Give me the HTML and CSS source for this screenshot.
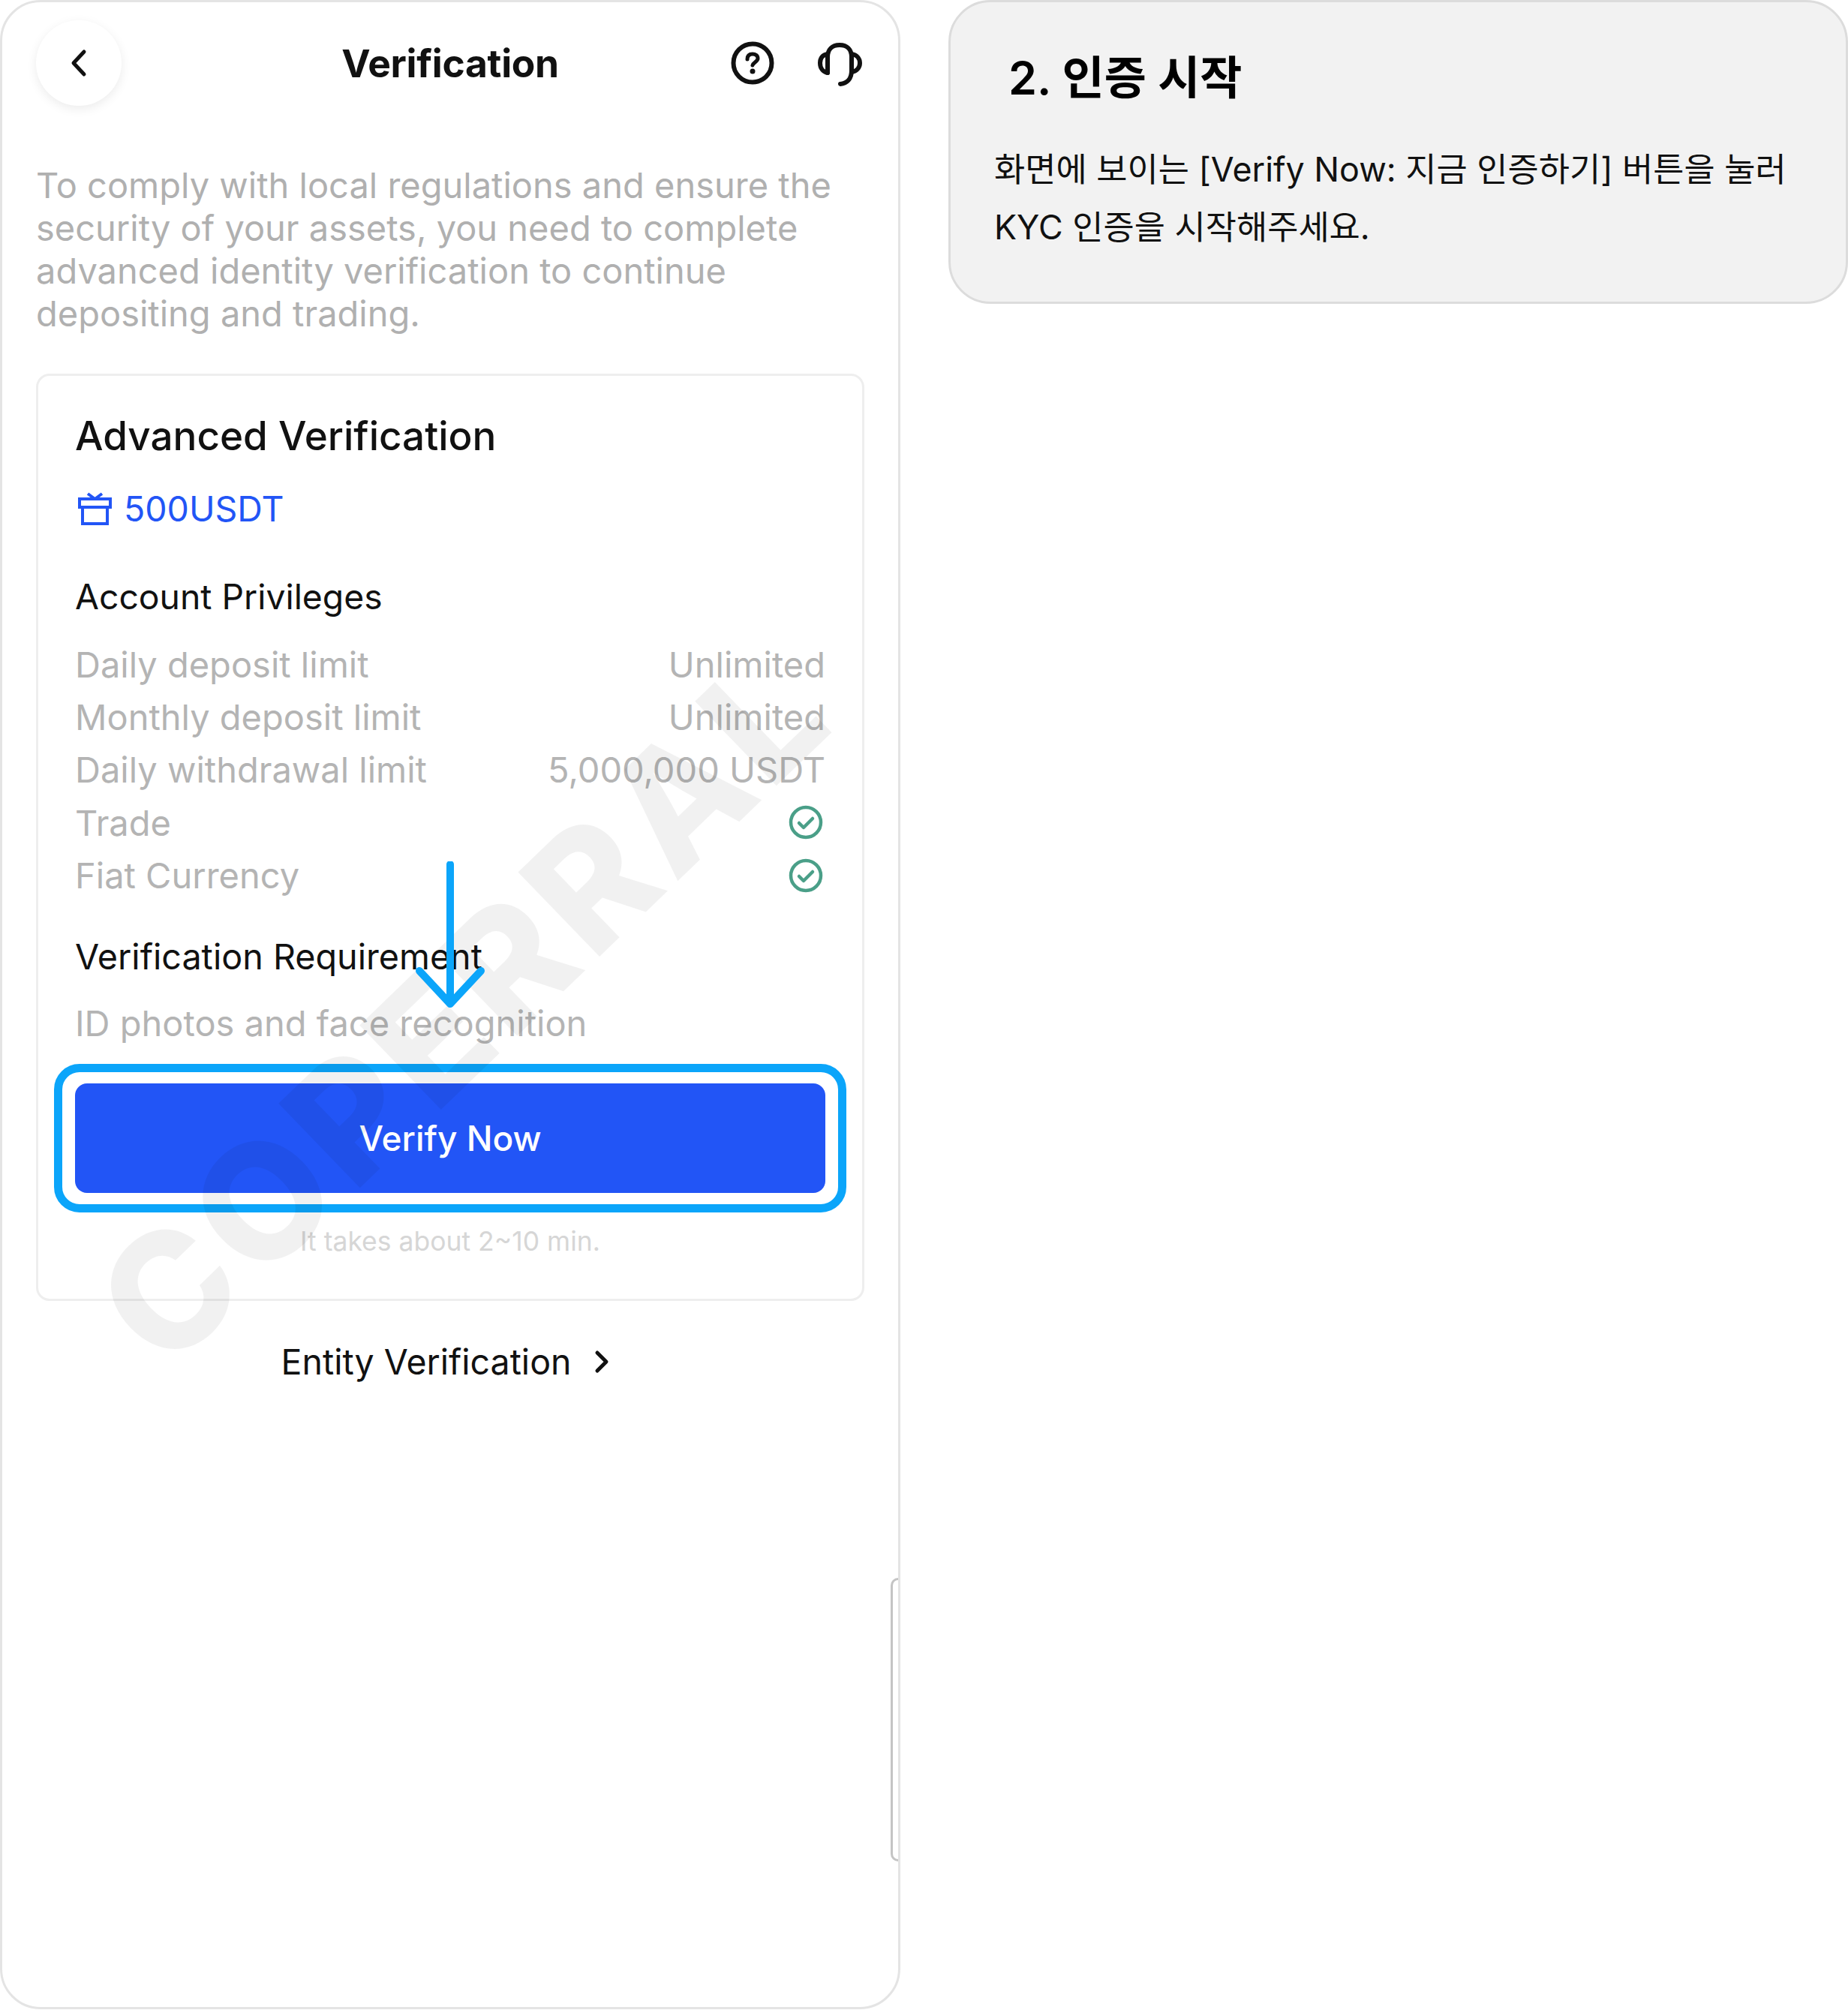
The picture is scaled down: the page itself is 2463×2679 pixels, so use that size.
FILE: index.html
```html
<!DOCTYPE html>
<html lang="ko">
<head>
  <meta charset="UTF-8" />
  <title>Verification</title>
  <link rel="stylesheet" href="styles.css">
</head>
<body>

<!-- Phone screen -->
<div class="phone">
  <div class="header">
    <div class="back">
      <svg width="30" height="42" viewBox="0 0 30 42"><path d="M22 6 L8 21 L22 36" fill="none" stroke="#111" stroke-width="5" stroke-linecap="round" stroke-linejoin="round"/></svg>
    </div>
    <div class="title">Verification</div>
    <div class="header-icons">
      <svg width="60" height="60" viewBox="0 0 60 60">
        <circle cx="30" cy="30" r="25.5" fill="none" stroke="#111" stroke-width="6"/>
        <path d="M23 25 C23 20 26 18 30 18 C34 18 37 20 37 24 C37 28 31 29 30 33" fill="none" stroke="#111" stroke-width="5" stroke-linecap="round"/>
        <circle cx="30" cy="41" r="3.5" fill="#111"/>
      </svg>
      <svg width="64" height="64" viewBox="0 0 64 64">
        <path d="M16 45 V24 C16 14 22 8 32 8 C42 8 48 14 48 24 V42 C48 53 42 59 33 60" fill="none" stroke="#111" stroke-width="6" stroke-linecap="round"/>
        <path d="M16 20 C9 21 6 26 6 32 C6 39 10 44 16 45 Z" fill="none" stroke="#111" stroke-width="6" stroke-linejoin="round"/>
        <path d="M48 20 C55 21 59 26 59 32 C59 38 55 43 48 44" fill="none" stroke="#111" stroke-width="6" stroke-linecap="round"/>
      </svg>
    </div>
  </div>

  <p class="desc">To comply with local regulations and ensure the security of your assets, you need to complete advanced identity verification to continue depositing and trading.</p>

  <div class="card">
    <div class="card-title">Advanced Verification</div>
    <div class="reward">
      <svg width="46" height="46" viewBox="0 0 46 46">
        <path d="M3 10 H44 V21 H3 Z M7 21 V43 H40 V21 M23.500 10 L14 3 M23.500 10 L33 3" fill="none" stroke="#2255f6" stroke-width="4"/>
      </svg>
      <span>500USDT</span>
    </div>

    <div class="section-label">Account Privileges</div>
    <div class="rows">
      <div class="row"><span>Daily deposit limit</span><span>Unlimited</span></div>
      <div class="row"><span>Monthly deposit limit</span><span>Unlimited</span></div>
      <div class="row"><span>Daily withdrawal limit</span><span>5,000,000 USDT</span></div>
      <div class="row"><span>Trade</span>
        <svg class="check" width="46" height="46" viewBox="0 0 46 46"><circle cx="23" cy="23" r="20" fill="none" stroke="#4a9f88" stroke-width="4.5"/><path d="M14 24 L20 30 L32 18" fill="none" stroke="#4a9f88" stroke-width="4.5" stroke-linecap="round" stroke-linejoin="round"/></svg>
      </div>
      <div class="row"><span>Fiat Currency</span>
        <svg class="check" width="46" height="46" viewBox="0 0 46 46"><circle cx="23" cy="23" r="20" fill="none" stroke="#4a9f88" stroke-width="4.5"/><path d="M14 24 L20 30 L32 18" fill="none" stroke="#4a9f88" stroke-width="4.5" stroke-linecap="round" stroke-linejoin="round"/></svg>
      </div>
    </div>

    <div class="section-label req-label">Verification Requirement</div>
    <div class="req-text">ID photos and face recognition</div>

    <div class="verify-wrap">
      <div class="verify-btn">Verify Now</div>
      <div class="highlight"></div>
    </div>
    <div class="note">It takes about 2~10 min.</div>
  </div>

  <div class="entity">
    <span>Entity Verification</span>
    <svg width="24" height="34" viewBox="0 0 24 34"><path d="M6 5 L18 17 L6 29" fill="none" stroke="#111" stroke-width="5" stroke-linecap="round" stroke-linejoin="round"/></svg>
  </div>

  <!-- overlays -->
  <div class="watermark">COPERRAL</div>
  <svg class="arrow" width="100" height="200" viewBox="0 0 100 200">
    <path d="M50 4 V190 M9 146 L50 190 L91 146" fill="none" stroke="#0ba5fa" stroke-width="10" stroke-linecap="round" stroke-linejoin="round"/>
  </svg>
  <div class="side-tab"></div>
</div>

<!-- Step note -->
<div class="note-card">
  <h2 class="step-title">2. 인증 시작</h2>
  <p class="step-text">화면에 보이는 [Verify Now: 지금 인증하기] 버튼을 눌러<br>KYC 인증을 시작해주세요.</p>
</div>

</body>
</html>
```

FILE: styles.css
```css
* {
  box-sizing: border-box;
}
body {
  margin: 0;
  background: #fff;
  font-family: Inter, "Noto Sans CJK KR", sans-serif;
  display: flex;
  align-items: flex-start;
  gap: 64px;
  width: 2463px;
  height: 2679px;
  overflow: hidden;
}
.phone {
  position: relative;
  flex: none;
  width: 1200px;
  height: 2678px;
  border: 3px solid #e4e4e4;
  border-radius: 54px;
  padding: 0 45px;
  overflow: hidden;
  background: #fff;
}
.header {
  display: flex;
  align-items: center;
  justify-content: space-between;
  height: 162px;
  position: relative;
}
.back {
  width: 114px;
  height: 114px;
  border-radius: 50%;
  background: #fff;
  box-shadow: 0 4px 14px rgba(0, 0, 0, 0.08);
  display: flex;
  align-items: center;
  justify-content: center;
}
.title {
  position: absolute;
  left: 0;
  right: 0;
  text-align: center;
  font-size: 51.5px;
  font-weight: 700;
  color: #111;
  letter-spacing: -0.3px;
}
.header-icons {
  display: flex;
  align-items: center;
  gap: 54px;
  margin-right: 1px;
}
.desc {
  margin: 53px 0 52px;
  font-size: 47px;
  line-height: 57px;
  color: #b0b0b0;
}
.card {
  border: 3px solid #eee;
  border-radius: 18px;
  padding: 48px 49px 0;
  height: 1236px;
}
.card-title {
  font-size: 53px;
  line-height: 64px;
  font-weight: 500;
  color: #111;
}
.reward {
  display: flex;
  align-items: center;
  gap: 16px;
  margin-top: 35px;
  padding-left: 3px;
  font-size: 46.5px;
  line-height: 60px;
  color: #2255f6;
}
.section-label {
  margin-top: 56px;
  font-size: 46.3px;
  line-height: 62px;
  color: #111;
}
.rows {
  margin-top: 24px;
}
.row {
  display: flex;
  align-items: center;
  justify-content: space-between;
  height: 70.4px;
  font-size: 47px;
  color: #b4b4b4;
}
.check {
  margin-right: 3px;
}
.req-label {
  margin-top: 42px;
  font-size: 46.7px;
}
.req-text {
  margin-top: 27px;
  font-size: 47px;
  line-height: 62px;
  color: #b4b4b4;
}
.verify-wrap {
  position: relative;
  margin-top: 49px;
}
.verify-btn {
  height: 146px;
  border-radius: 16px;
  background: #2255f6;
  color: #fff;
  font-size: 46px;
  font-weight: 500;
  display: flex;
  align-items: center;
  justify-content: center;
}
.highlight {
  position: absolute;
  top: -26px;
  bottom: -26px;
  left: -28px;
  right: -28px;
  border: 11px solid #0ba5fa;
  border-radius: 34px;
}
.note {
  margin-top: 42px;
  text-align: center;
  font-size: 35.5px;
  line-height: 46px;
  color: #d6d6d6;
}
.entity {
  display: flex;
  align-items: center;
  justify-content: center;
  gap: 28px;
  margin-top: 50px;
  margin-left: -12px;
  font-size: 46.5px;
  line-height: 62px;
  color: #111;
}
.watermark {
  position: absolute;
  left: -10px;
  top: 1232px;
  font-size: 215px;
  line-height: 1;
  font-weight: 800;
  letter-spacing: 10px;
  white-space: nowrap;
  color: rgba(0, 0, 0, 0.055);
  transform: rotate(-44deg);
  transform-origin: 50% 50%;
  pointer-events: none;
}
.arrow {
  position: absolute;
  left: 547px;
  top: 1145px;
}
.side-tab {
  position: absolute;
  right: 0;
  top: 2100px;
  width: 10px;
  height: 378px;
  border: 3px solid #c4c4c4;
  border-right: none;
  border-radius: 12px 0 0 12px;
}
.note-card {
  flex: none;
  width: 1199px;
  height: 405px;
  background: #f2f2f2;
  border: 3px solid #dcdcdc;
  border-radius: 56px;
  padding: 60px 58px 0;
  color: #111;
}
.step-title {
  margin: 0 0 0 19px;
  font-size: 61px;
  line-height: 82px;
  font-weight: 600;
  color: #000;
}
.step-text {
  margin: 43px 0 0;
  font-size: 44.8px;
  line-height: 77px;
  white-space: nowrap;
}
```
